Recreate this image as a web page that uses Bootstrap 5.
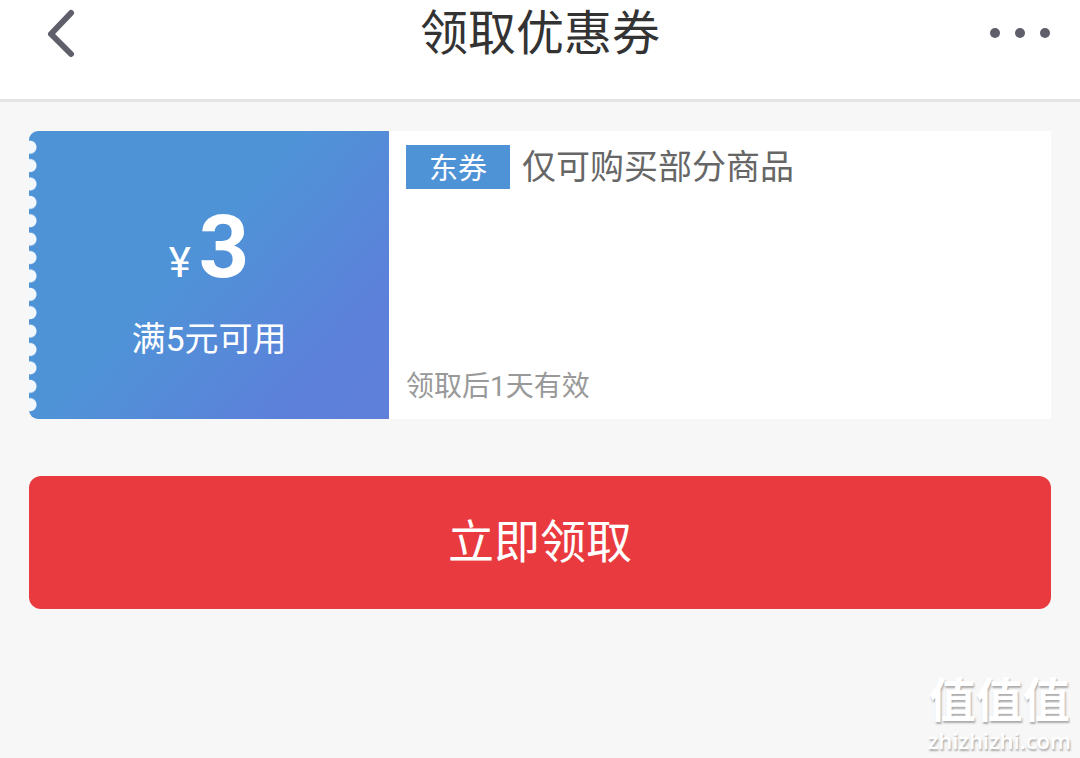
<!DOCTYPE html>
<html lang="zh-CN">
<head>
<meta charset="utf-8">
<meta name="viewport" content="width=device-width, initial-scale=1">
<title>领取优惠券</title>
<link href="https://cdn.jsdelivr.net/npm/bootstrap@5.3.0/dist/css/bootstrap.min.css" rel="stylesheet">
<style>
  body { background: #f7f7f7; font-family: Roboto, "Noto Sans CJK SC", sans-serif; }
  .top-bar { height: 102px; padding: 0 28px 35px; background: #fff; border-bottom: 3px solid #e5e5e5; }
  .top-bar h1 { font-size: 48px; line-height: 64px; padding-top: 3px; color: #333; }
  .icon-btn { width: 64px; height: 64px; color: #5f5f6b; line-height: 0; }
  .page-body { padding: 29px; }
  .coupon { min-height: 288px; background: #fff; }
  .coupon-value { position: relative; width: 360px; padding-top: 12px; color: #fff; border-radius: 9px 0 0 9px; overflow: hidden;
    background: linear-gradient(132deg, #4f93d7 0%, #4f93d7 44%, #5c81da 80%, #5f7fda 100%); }
  /* punched ticket edge */
  .coupon-value::before { content: ""; position: absolute; left: 0; top: 7px; bottom: 5px; width: 9px;
    background: radial-gradient(circle at 1px 50%, #f3f8fd 6px, transparent 7px) 0 0 / 9px 18px;
    background-repeat: no-repeat round; }
  .coupon-tear { background: #f7f7f7; }
  .yen { font-size: 42px; }
  .amount { font-size: 88px; line-height: 96px; font-weight: 700; }
  .rule { margin-top: 20px; font-size: 34px; line-height: 48px; }
  .coupon-info { padding: 14px 17px; }
  .tag { width: 104px; height: 44px; padding-top: 2px; background: #4f93d7; color: #fff; font-size: 29px; line-height: 44px; }
  .scope { font-size: 34px; line-height: 44px; color: #666; }
  .valid { font-size: 28px; line-height: 36px; color: #999; }
  .claim { height: 133px; margin-top: 57px; background: #e93b3f; color: #fff; border: 0; border-radius: 12px; font-size: 46px; }
  .claim:hover { background: #d93337; color: #fff; }
  .site-mark { padding: 0 9px 5px; color: #fff; text-shadow: 1px 2px 2px #aaa; }
  .mark-name { font-size: 47px; line-height: 52px; font-weight: 700; }
  .mark-url { font-family: "Open Sans", sans-serif; font-size: 22px; line-height: 26px; font-weight: 600; }
</style>
</head>
<body class="d-flex flex-column min-vh-100">
<header class="top-bar d-flex justify-content-between align-items-center">
  <button type="button" class="icon-btn btn p-0 border-0" aria-label="返回">
    <svg width="64" height="64" viewBox="0 0 64 64" fill="none" stroke="currentColor" stroke-width="6" stroke-linecap="round" stroke-linejoin="round"><path d="M43 13 23 34 43 54"/></svg>
  </button>
  <h1 class="m-0 fw-normal">领取优惠券</h1>
  <button type="button" class="icon-btn btn p-0 border-0" aria-label="更多">
    <svg width="64" height="64" viewBox="0 0 64 64" fill="currentColor"><circle cx="7" cy="33" r="5"/><circle cx="32" cy="33" r="5"/><circle cx="57" cy="33" r="5"/></svg>
  </button>
</header>
<main class="page-body">
  <section class="coupon d-flex">
    <div class="coupon-tear d-flex flex-shrink-0">
      <div class="coupon-value d-flex flex-column align-items-center justify-content-center">
        <div class="d-flex align-items-baseline gap-2"><span class="yen">¥</span><span class="amount">3</span></div>
        <div class="rule">满5元可用</div>
      </div>
    </div>
    <div class="coupon-info flex-grow-1 d-flex flex-column justify-content-between">
      <div class="d-flex align-items-center">
        <span class="tag text-center">东券</span>
        <span class="scope ps-2 ms-1">仅可购买部分商品</span>
      </div>
      <div class="valid">领取后1天有效</div>
    </div>
  </section>
  <button type="button" class="claim btn w-100">立即领取</button>
</main>
<footer class="site-mark mt-auto align-self-end text-center">
  <div class="mark-name">值值值</div>
  <div class="mark-url">zhizhizhi.com</div>
</footer>
<script src="https://cdn.jsdelivr.net/npm/bootstrap@5.3.0/dist/js/bootstrap.bundle.min.js"></script>
</body>
</html>
